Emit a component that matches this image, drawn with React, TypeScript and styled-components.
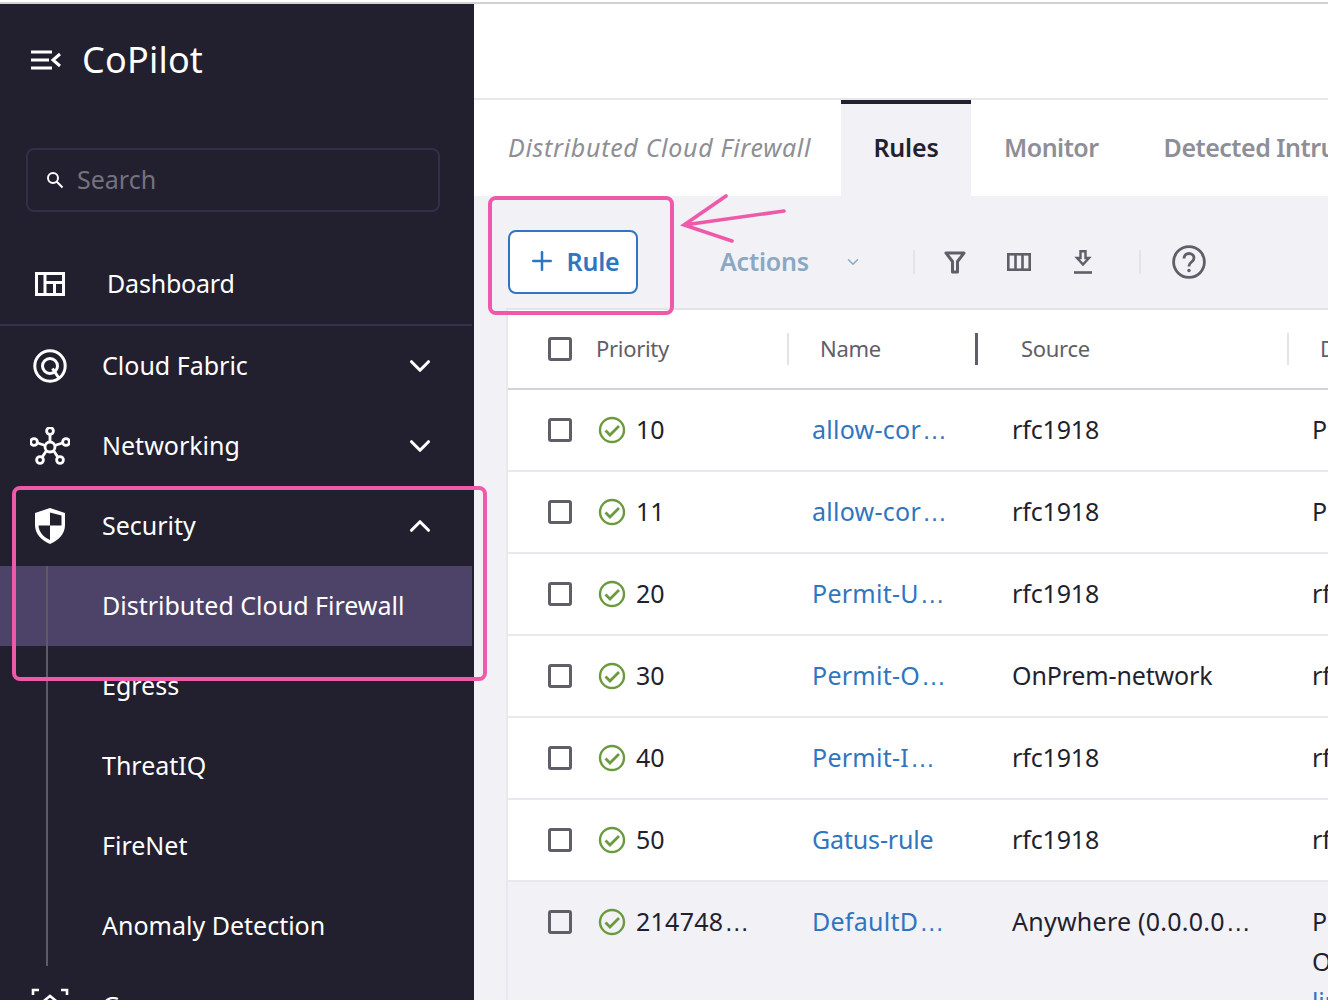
import React from "react";
import styled, { createGlobalStyle } from "styled-components";
import { ChevronDown, ChevronUp, Plus } from "lucide-react";

const FONT = `"Noto Sans", "Open Sans", sans-serif`;

const GlobalStyle = createGlobalStyle`
  html, body {
    margin: 0;
    padding: 0;
    height: 1000px;
    overflow: hidden;
    background: #fff;
    font-family: ${FONT};
  }
`;

const Page = styled.div`
  position: relative;
  width: 1328px;
  height: 1000px;
  overflow: hidden;
  display: flex;
  flex-direction: column;
`;

const TopLine = styled.div`
  flex: 0 0 2px;
  margin-top: 2px;
  background: #d2d2d4;
`;

const Body = styled.div`
  flex: 1;
  display: flex;
  min-height: 0;
`;

const Sidebar = styled.aside`
  flex: 0 0 474px;
  padding-right: 2px;
  box-sizing: border-box;
  background: #221f2f;
  color: #fff;
  overflow: hidden;
`;

const Logo = styled.div`
  box-sizing: border-box;
  height: 112px;
  display: flex;
  align-items: center;
  padding: 0 0 0 31px;
  gap: 21px;
  font-size: 36px;
  letter-spacing: 0.2px;
  & > span {
    padding-bottom: 2px;
  }
`;

const SearchBox = styled.div`
  box-sizing: border-box;
  margin: 32px 0 32px 26px;
  width: 414px;
  height: 64px;
  border: 2px solid #332e4a;
  border-radius: 8px;
  display: flex;
  align-items: center;
  gap: 13px;
  padding-left: 18px;
  color: #74727f;
  font-size: 25px;
  & > span {
    padding-bottom: 2px;
  }
`;

const NavItem = styled.div<{ $gap?: number }>`
  height: 80px;
  display: flex;
  align-items: center;
  padding-left: 30px;
  font-size: 25px;
  position: relative;
  & > svg:first-child {
    flex: 0 0 40px;
  }
  & > span {
    margin-left: ${(p) => p.$gap ?? 33}px;
    padding-bottom: 2px;
    flex: 1;
  }
  & > svg:last-child:not(:first-child) {
    margin-right: 35px;
  }
`;

const DashboardItem = styled(NavItem)`
  border-bottom: 2px solid #37324b;
  letter-spacing: -0.2px;
`;

const SubNav = styled.div`
  position: relative;
  &::before {
    content: "";
    position: absolute;
    left: 46px;
    top: 0;
    bottom: 0;
    width: 2px;
    background: #5d5c66;
    z-index: 1;
  }
`;

const SubItem = styled.div<{ $active?: boolean }>`
  box-sizing: border-box;
  height: 80px;
  display: flex;
  align-items: center;
  padding: 0 0 2px 102px;
  font-size: 25px;
  background: ${(p) => (p.$active ? "#4d4369" : "transparent")};
`;

const Main = styled.main`
  flex: 1;
  min-width: 0;
  display: flex;
  flex-direction: column;
  overflow: hidden;
`;

const Header = styled.div`
  flex: 0 0 94px;
  border-bottom: 2px solid #e8e8ec;
  box-sizing: content-box;
`;

const Tabs = styled.div`
  flex: 0 0 96px;
  display: flex;
  white-space: nowrap;
  overflow: hidden;
`;

const PageTitle = styled.div`
  flex: 0 0 367px;
  box-sizing: border-box;
  padding: 0 0 2px 34px;
  display: flex;
  align-items: center;
  font-style: italic;
  font-size: 25px;
  letter-spacing: 0.7px;
  color: #8e8e95;
`;

const Tab = styled.div<{ $active?: boolean }>`
  flex: 0 0 auto;
  display: flex;
  align-items: center;
  justify-content: center;
  box-sizing: border-box;
  width: ${(p) => (p.$active ? "130px" : "auto")};
  padding: ${(p) => (p.$active ? "0 0 6px" : "0 32px 6px 33px")};
  font-size: 25px;
  font-weight: 600;
  letter-spacing: ${(p) => (p.$active ? "-0.2px" : "-0.5px")};
  color: ${(p) => (p.$active ? "#221f2f" : "#8e8e97")};
  background: ${(p) => (p.$active ? "#f1f1f6" : "transparent")};
  border-top: 4px solid ${(p) => (p.$active ? "#221f2f" : "transparent")};
`;

const Content = styled.div`
  flex: 1;
  min-height: 0;
  background: #f1f1f6;
  display: flex;
  flex-direction: column;
`;

const Toolbar = styled.div`
  flex: 0 0 112px;
  box-sizing: border-box;
  padding: 20px 0 0 34px;
  display: flex;
  align-items: center;
`;

const AddButton = styled.button`
  box-sizing: border-box;
  width: 130px;
  height: 64px;
  background: #fff;
  border: 2px solid #2f75c0;
  border-radius: 8px;
  color: #2f75c0;
  font-family: ${FONT};
  font-size: 25px;
  font-weight: 600;
  letter-spacing: -0.2px;
  display: flex;
  align-items: center;
  justify-content: center;
  gap: 10px;
  padding: 0 0 2px;
`;

const ActionsMenu = styled.div`
  margin-left: 82px;
  width: 193px;
  display: flex;
  align-items: center;
  color: #8aa8c4;
  font-size: 25px;
  font-weight: 600;
  letter-spacing: -0.2px;
  & > span {
    width: 124px;
    padding-bottom: 2px;
  }
`;

const ToolSep = styled.div<{ $offset?: number }>`
  width: 2px;
  height: 24px;
  margin-left: ${(p) => p.$offset ?? 0}px;
  background: #e3e3e9;
`;

const ToolIcon = styled.div<{ $width: number }>`
  width: ${(p) => p.$width}px;
  display: flex;
  justify-content: center;
  align-items: center;
`;

const Table = styled.div`
  flex: 1;
  margin-left: 32px;
  border-left: 2px solid #e8e8ee;
  border-top: 2px solid #e3e3e9;
  background: #fff;
  min-width: 0;
`;

const HeadRow = styled.div`
  height: 78px;
  display: grid;
  grid-template-columns: 279px 188px 312px 1fr;
  align-items: center;
  border-bottom: 2px solid #d2d2d9;
  color: #5f5e69;
  font-size: 22px;
  letter-spacing: -0.3px;
  white-space: nowrap;
`;

const HeadCell = styled.div<{ $pad: number; $dark?: boolean; $first?: boolean }>`
  box-sizing: border-box;
  height: 32px;
  display: flex;
  align-items: center;
  padding: 0 0 2px ${(p) => p.$pad}px;
  border-left: ${(p) => (p.$first ? "0" : p.$dark ? "3px solid #5f5e69" : "2px solid #e3e3e9")};
  gap: 24px;
`;

const Row = styled.div<{ $muted?: boolean; $tall?: boolean }>`
  height: ${(p) => (p.$tall ? 130 : 80)}px;
  display: grid;
  grid-template-columns: 304px 200px 300px 1fr;
  align-items: start;
  background: ${(p) => (p.$muted ? "#f1f1f6" : "#fff")};
  border-bottom: ${(p) => (p.$muted ? "0" : "2px solid #e8e8ee")};
  color: #221f2f;
  font-size: 25px;
  letter-spacing: -0.15px;
  line-height: 40px;
  white-space: nowrap;
`;

const PriorityCell = styled.div`
  padding: 20px 0 0 40px;
  display: flex;
  align-items: center;
  height: 40px;
`;

const PriorityValue = styled.div`
  margin: -2px 0 0 10px;
`;

const Cell = styled.div`
  padding-top: 19px;
`;

const NameLink = styled.a`
  color: #2f75c0;
`;

const Clipped = styled.span`
  letter-spacing: 0.25px;
`;

const Dots = styled.span`
  font-family: "Liberation Sans", sans-serif;
  margin-left: 1px;
`;

const Checkbox = styled.span`
  box-sizing: border-box;
  display: block;
  flex: 0 0 24px;
  width: 24px;
  height: 24px;
  border: 3px solid #5f5e69;
  border-radius: 3px;
`;

const HeadCheckbox = styled(Checkbox)`
  margin-top: 2px;
`;

const RowCheckbox = styled(Checkbox)`
  margin-right: 26px;
`;

const Highlight = styled.div<{ $x: number; $y: number; $w: number; $h: number }>`
  position: absolute;
  left: ${(p) => p.$x}px;
  top: ${(p) => p.$y}px;
  width: ${(p) => p.$w}px;
  height: ${(p) => p.$h}px;
  box-sizing: border-box;
  border: 4px solid #ee5aa9;
  border-radius: 8px;
  z-index: 5;
`;

const Arrow = styled.svg`
  position: absolute;
  left: 676px;
  top: 190px;
  z-index: 5;
`;

const MenuIcon = () => (
  <svg width="30" height="20" viewBox="0 0 30 20" fill="none" stroke="#fff" strokeWidth="3">
    <path d="M0 2h21M0 10h18M0 18h21" />
    <path d="M29 4l-7 6 7 6" />
  </svg>
);

const SearchIcon = () => (
  <svg width="18" height="18" viewBox="0 0 18 18" fill="none" stroke="#fff" strokeWidth="2">
    <circle cx="7" cy="7" r="5" />
    <path d="M10.8 10.8L16.5 16.5" />
  </svg>
);

const DashboardIcon = () => (
  <svg width="40" height="24" viewBox="0 0 40 24" fill="none" stroke="#fff" strokeWidth="3">
    <rect x="6.500" y="1.500" width="27" height="21" />
    <path d="M15 1.500v21M15 10.500h18.500M24.500 10.500v12" />
  </svg>
);

const FabricIcon = () => (
  <svg width="40" height="34" viewBox="0 0 40 34" fill="none" stroke="#fff" strokeWidth="3">
    <circle cx="20" cy="17" r="15.200" />
    <circle cx="20" cy="17" r="7.500" />
    <path d="M22.500 19.500l6 9" />
  </svg>
);

const NetworkIcon = () => (
  <svg width="40" height="38" viewBox="0 0 40 38" fill="none" stroke="#fff" strokeWidth="2.800">
    <circle cx="20" cy="20" r="5" />
    <circle cx="20" cy="4" r="3.400" />
    <circle cx="4" cy="15" r="3.400" />
    <circle cx="36" cy="15" r="3.400" />
    <circle cx="10" cy="33" r="3.400" />
    <circle cx="30" cy="33" r="3.400" />
    <path d="M20 7.500V15M7.500 16l8 2.500M32.500 16l-8 2.500M12 30.500l4.500-7M28 30.500l-4.500-7" />
  </svg>
);

const ShieldIcon = () => (
  <svg width="40" height="38" viewBox="0 0 40 38" fill="#fff">
    <path
      fillRule="evenodd"
      d="M20 1l15 5v12c0 9-6.500 15.500-15 19C11.500 33.500 5 27 5 18V6L20 1zM20 5.500v13H8.500c.5 7 5 11.500 11.500 14.500v-14.500h11.500V8.500L20 5.500z"
    />
  </svg>
);

const GroupIcon = () => (
  <svg width="40" height="38" viewBox="0 0 40 38" fill="none" stroke="#fff" strokeWidth="2.600">
    <path d="M3 8V3h6M31 3h6v5" />
    <path d="M9 18L20 9l11 9v12H9z" />
  </svg>
);

const FilterIcon = () => (
  <svg width="22" height="23" viewBox="0 0 22 23" fill="none" stroke="#5f5e69" strokeWidth="3">
    <path d="M2 2h18l-6.500 8.500V21h-5V10.500z" strokeLinejoin="round" />
  </svg>
);

const ColumnsIcon = () => (
  <svg width="24" height="18" viewBox="0 0 24 18" fill="none" stroke="#5f5e69" strokeWidth="2.600">
    <rect x="1.300" y="1.300" width="21.400" height="15.400" />
    <path d="M8.500 1v16M15.500 1v16" />
  </svg>
);

const DownloadIcon = () => (
  <svg width="20" height="24" viewBox="0 0 20 24" fill="none" stroke="#5f5e69" strokeWidth="2.400">
    <path d="M7.500 1.200h5V8h3.500L10 14.500 4 8h3.500z" />
    <path d="M1 22.500h18" strokeWidth="2.600" />
  </svg>
);

const HelpIcon = () => (
  <svg width="34" height="34" viewBox="0 0 34 34" fill="none" stroke="#5f5e69" strokeWidth="2.800">
    <circle cx="17" cy="17" r="15.400" />
    <path d="M12 13.500c0-3 2.200-5 5-5s5 2 5 4.500c0 4-5 4-5 8v.5" />
    <circle cx="17" cy="25.500" r="1.700" fill="#5f5e69" stroke="none" />
  </svg>
);

const StatusIcon = () => (
  <svg width="28" height="28" viewBox="0 0 28 28" fill="none" stroke="#6a9a3d">
    <circle cx="14" cy="14" r="12" strokeWidth="2.400" />
    <path d="M7.500 14.500l4.500 4.500 9-9" strokeWidth="2.800" />
  </svg>
);

const cut = (text: string) => (
  <Clipped>
    {text}
    <Dots>…</Dots>
  </Clipped>
);

const rules = [
  { priority: "10", name: cut("allow-cor"), source: "rfc1918", dest: "Private" },
  { priority: "11", name: cut("allow-cor"), source: "rfc1918", dest: "Private" },
  { priority: "20", name: cut("Permit-U"), source: "rfc1918", dest: "rfc1918" },
  { priority: "30", name: cut("Permit-O"), source: "OnPrem-network", dest: "rfc1918" },
  { priority: "40", name: cut("Permit-I"), source: "rfc1918", dest: "rfc1918" },
  { priority: "50", name: "Gatus-rule", source: "rfc1918", dest: "rfc1918" },
];

const subItems = ["Egress", "ThreatIQ", "FireNet", "Anomaly Detection"];

const App = () => {
  return (
    <Page>
      <GlobalStyle />
      <TopLine />
      <Body>
        <Sidebar>
          <Logo>
            <MenuIcon />
            <span>CoPilot</span>
          </Logo>
          <SearchBox>
            <SearchIcon />
            <span>Search</span>
          </SearchBox>
          <DashboardItem $gap={37}>
            <DashboardIcon />
            <span>Dashboard</span>
          </DashboardItem>
          <NavItem $gap={32}>
            <FabricIcon />
            <span>Cloud Fabric</span>
            <ChevronDown size={34} strokeWidth={2.2} />
          </NavItem>
          <NavItem $gap={32}>
            <NetworkIcon />
            <span>Networking</span>
            <ChevronDown size={34} strokeWidth={2.2} />
          </NavItem>
          <NavItem $gap={32}>
            <ShieldIcon />
            <span>Security</span>
            <ChevronUp size={34} strokeWidth={2.2} />
          </NavItem>
          <SubNav>
            <SubItem $active>Distributed Cloud Firewall</SubItem>
            {subItems.map((s) => (
              <SubItem key={s}>{s}</SubItem>
            ))}
          </SubNav>
          <NavItem $gap={32}>
            <GroupIcon />
            <span>Groups</span>
          </NavItem>
        </Sidebar>
        <Main>
          <Header />
          <Tabs>
            <PageTitle>Distributed Cloud Firewall</PageTitle>
            <Tab $active>Rules</Tab>
            <Tab>Monitor</Tab>
            <Tab>Detected Intrusions</Tab>
          </Tabs>
          <Content>
            <Toolbar>
              <AddButton>
                <Plus size={30} strokeWidth={2} />
                Rule
              </AddButton>
              <ActionsMenu>
                <span>Actions</span>
                <ChevronDown size={18} strokeWidth={2} />
              </ActionsMenu>
              <ToolSep />
              <ToolIcon $width={80}>
                <FilterIcon />
              </ToolIcon>
              <ToolIcon $width={48}>
                <ColumnsIcon />
              </ToolIcon>
              <ToolIcon $width={80}>
                <DownloadIcon />
              </ToolIcon>
              <ToolSep $offset={16} />
              <ToolIcon $width={96}>
                <HelpIcon />
              </ToolIcon>
            </Toolbar>
            <Table>
              <HeadRow>
                <HeadCell $pad={40} $first>
                  <HeadCheckbox />
                  Priority
                </HeadCell>
                <HeadCell $pad={31}>Name</HeadCell>
                <HeadCell $pad={43} $dark>
                  Source
                </HeadCell>
                <HeadCell $pad={31}>Destination</HeadCell>
              </HeadRow>
              {rules.map((r) => (
                <Row key={r.priority}>
                  <PriorityCell>
                    <RowCheckbox />
                    <StatusIcon />
                    <PriorityValue>{r.priority}</PriorityValue>
                  </PriorityCell>
                  <Cell>
                    <NameLink>{r.name}</NameLink>
                  </Cell>
                  <Cell>{r.source}</Cell>
                  <Cell>{r.dest}</Cell>
                </Row>
              ))}
              <Row $muted $tall>
                <PriorityCell>
                  <RowCheckbox />
                  <StatusIcon />
                  <PriorityValue>{cut("214748")}</PriorityValue>
                </PriorityCell>
                <Cell>
                  <NameLink>{cut("DefaultD")}</NameLink>
                </Cell>
                <Cell>{cut("Anywhere (0.0.0.0")}</Cell>
                <Cell>
                  Public
                  <br />
                  Other
                  <br />
                  <NameLink>link</NameLink>
                </Cell>
              </Row>
            </Table>
          </Content>
        </Main>
      </Body>
      <Highlight $x={12} $y={486} $w={475} $h={195} />
      <Highlight $x={488} $y={196} $w={186} $h={119} />
      <Arrow width="112" height="56" viewBox="0 0 112 56" fill="none" stroke="#ee5aa9" strokeWidth="3.600" strokeLinecap="round">
        <path d="M50 6L8 35l48 16M8 35l100-14" />
      </Arrow>
    </Page>
  );
};

export default App;
